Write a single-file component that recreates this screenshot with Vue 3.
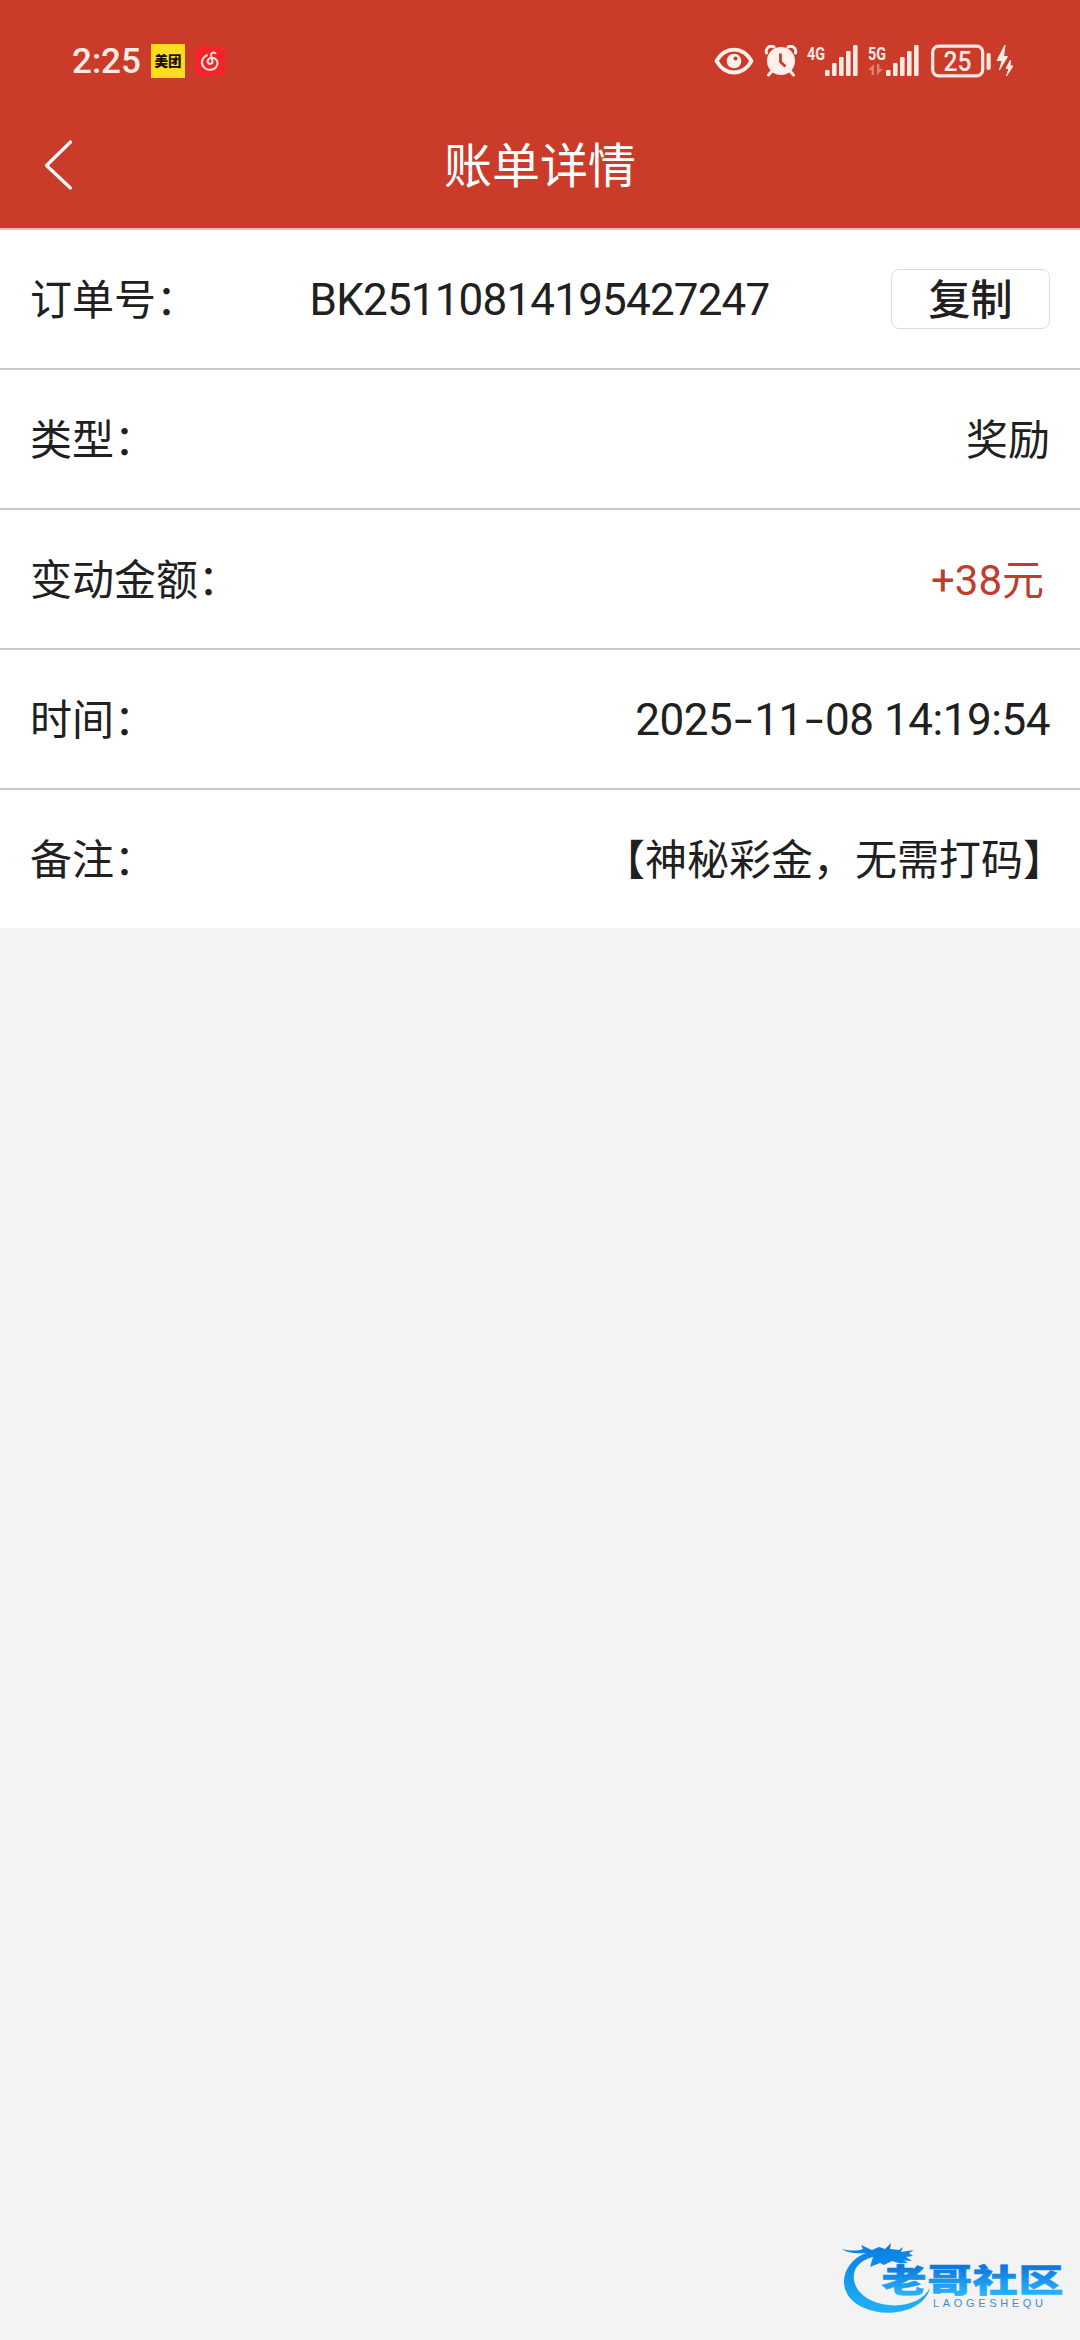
<script setup>
const rows = [
  { label: '订单号', value: 'BK25110814195427247', kind: 'order', copy: true },
  { label: '类型', value: '奖励', kind: 'plain' },
  { label: '变动金额', value: '+38元', kind: 'amount' },
  { label: '时间', value: '2025-11-08 14:19:54', kind: 'time' },
  { label: '备注', value: '【神秘彩金，无需打码】', kind: 'remark' },
]
const bars = [6, 13, 19, 25, 31]
const parts = (text) => text.split(/(-)/)
</script>

<template>
  <div class="page">
    <header class="top">
      <div class="status">
        <span class="clock">2:25</span>
        <span class="meituan">美团</span>
        <svg class="netease" width="30" height="30" viewBox="0 0 30 30">
          <rect width="30" height="30" rx="6" fill="#f5242b" />
          <path d="M20.5 7.2C18.2 5.6 15.6 7 16.1 9.5L17.5 15.4C18 18.3 12.8 19 12.6 15.5C12.5 12.2 17.1 10.5 20.5 13C24.5 16.5 22 23.8 15.2 23.8C9 23.8 5.5 18.5 7.5 13.6C8.4 11.4 10 10 12 9.2" fill="none" stroke="#ffe9e3" stroke-width="2" stroke-linecap="round" />
        </svg>
        <div class="spacer"></div>
        <svg class="eye" width="40" height="28" viewBox="0 0 40 28">
          <path d="M2.500 14C11 -1.300 29 -1.300 37.500 14C29 29.300 11 29.300 2.500 14Z" fill="none" stroke="#fff0eb" stroke-width="3.800" stroke-linejoin="round" />
          <circle cx="20" cy="14" r="7.300" fill="#fff0eb" />
          <circle cx="21.500" cy="11.500" r="2" fill="#cb3b29" />
        </svg>
        <svg class="alarm" width="34" height="32" viewBox="0 0 34 32">
          <path d="M2.500 8C1 3 6 0 10 2M31.500 8C33 3 28 0 24 2" fill="none" stroke="#fff0eb" stroke-width="3" stroke-linecap="round" />
          <path d="M8 26L4.500 30M26 26L29.500 30" stroke="#fff0eb" stroke-width="3" stroke-linecap="round" />
          <circle cx="17" cy="16" r="14" fill="#fff0eb" />
          <path d="M16.500 8.500V17L21.500 21.500" fill="none" stroke="#cb3b29" stroke-width="2.800" />
        </svg>
        <svg class="signal" width="52" height="34" viewBox="0 0 52 34">
          <text x="0" y="16" textLength="18" lengthAdjust="spacingAndGlyphs">4G</text>
          <rect v-for="(h, i) in bars" :key="i" :x="18 + i * 7" :y="32 - h" width="4.600" :height="h" rx="1.200" />
        </svg>
        <svg class="signal" width="52" height="34" viewBox="0 0 52 34">
          <text x="0" y="16" textLength="18" lengthAdjust="spacingAndGlyphs">5G</text>
          <path d="M0 26L6 20V31H3.600V26ZM9 20V31L15 25H11.400V20Z" opacity=".4" />
          <rect v-for="(h, i) in bars" :key="i" :x="18 + i * 7" :y="32 - h" width="4.600" :height="h" rx="1.200" />
        </svg>
        <svg class="battery" width="84" height="34" viewBox="0 0 84 34">
          <rect x="1.700" y="2.200" width="50" height="29.600" rx="6" fill="none" stroke="#ffe9e3" stroke-width="3.200" />
          <text x="26.500" y="26.500" text-anchor="middle" textLength="28" lengthAdjust="spacingAndGlyphs">25</text>
          <rect x="55.500" y="9" width="4.200" height="17" rx="2" />
          <path d="M74 1L66 16.500H71L68.500 26L76.500 12.500H72.500ZM79.500 16L75 24.500H78L75.500 32L82 22H79Z" stroke="#ffe9e3" stroke-width="1" stroke-linejoin="round" />
        </svg>
      </div>
      <div class="nav">
        <svg class="back" width="30" height="52" viewBox="0 0 30 52">
          <path d="M26.500 3L2.500 26.500L26.500 49" fill="none" stroke="#fff" stroke-width="3.200" stroke-linecap="round" stroke-linejoin="round" />
        </svg>
        <h1>账单详情</h1>
      </div>
    </header>

    <main class="list">
      <div v-for="row in rows" :key="row.label" class="row">
        <span class="label">{{ row.label }}：</span>
        <span class="value" :class="row.kind"><span v-for="(p, i) in parts(row.value)" :key="i" :class="{ dash: p === '-' }">{{ p }}</span></span>
        <button v-if="row.copy" class="copy">复制</button>
      </div>
    </main>

    <svg class="watermark" width="260" height="115" viewBox="0 0 260 115">
      <defs>
        <linearGradient id="ring" x1="0" y1="22" x2="0" y2="88" gradientUnits="userSpaceOnUse">
          <stop offset="0" stop-color="#0a7fe0" />
          <stop offset="1" stop-color="#20b2fb" />
        </linearGradient>
        <linearGradient id="word" x1="0" y1="0" x2="0" y2="1">
          <stop offset=".25" stop-color="#0b78df" />
          <stop offset=".85" stop-color="#28b2fa" />
        </linearGradient>
      </defs>
      <path fill="url(#ring)" d="M46 28C20 38 15 69 42 82C66 94 104 87 110 63C103 76 86 82 68 80C44 77 32 63 34 49C35 40 44 34 53 32L50 42L60 38L64 40L72 36L80 38.500L88 38L84 35.500L92 36L86 32L93 31L89 28L94 25L81 27L83 22L79 25L70 24L71 18L65 24L59 22L52 25L41 20L43 24C37 26 30 26 22 24C27 28 38 29 46 28Z" />
      <text class="word" transform="translate(61.500 67) scale(1 .72)" textLength="182">老哥社区</text>
      <text class="latin" x="113" y="81.500" textLength="110">LAOGESHEQU</text>
    </svg>
  </div>
</template>

<style>
body {
  background: #f3f3f3;
}
</style>

<style scoped>
.page {
  position: relative;
  width: 1080px;
  height: 2340px;
  overflow: hidden;
  background: #f3f3f3;
  color: #202020;
  font-family: Roboto, "Noto Sans CJK SC", sans-serif;
}
.top {
  height: 228px;
  background: #cb3b29;
  border-bottom: 2px solid #efb8b0;
}
.status {
  display: flex;
  align-items: center;
  height: 102px;
  padding: 20px 65px 0 72px;
  box-sizing: border-box;
}
.clock {
  width: 79px;
  font-size: 35px;
  font-weight: 500;
  line-height: 38px;
  padding-top: 2px;
  box-sizing: border-box;
  color: #ffeae5;
}
.meituan {
  width: 34px;
  height: 34px;
  background: #ffdc1d;
  color: #171000;
  font: 900 13.500px/33px "Noto Sans CJK SC", sans-serif;
  text-align: center;
}
.netease {
  margin-left: 10px;
}
.spacer {
  flex: 1;
}
.alarm {
  margin-left: 10px;
}
.signal {
  margin-left: 9px;
  fill: #ffe9e3;
  overflow: visible;
}
.signal text {
  font-size: 19px;
  font-weight: 700;
}
.battery {
  margin-left: 11px;
  fill: #ffe9e3;
}
.battery text {
  font-size: 28px;
  font-weight: 500;
}
.nav {
  display: flex;
  align-items: center;
  height: 126px;
  padding: 0 44px;
}
.back {
  flex: none;
}
.nav h1 {
  flex: 1;
  margin: 0 30px 0 0;
  padding-top: 3px;
  text-align: center;
  font-size: 48px;
  font-weight: 400;
  line-height: 60px;
  color: #fff;
}
.list {
  background: #fff;
}
.row {
  display: flex;
  align-items: center;
  height: 140px;
  padding: 0 30px 5px 30px;
  box-sizing: border-box;
  border-bottom: 2px solid #c8c8c8;
  font-size: 42px;
}
.row:last-child {
  height: 138px;
  border-bottom: 0;
}
.label {
  white-space: nowrap;
}
.value {
  flex: 1;
  text-align: right;
  white-space: nowrap;
}
.order {
  padding: 6px 10px 0 0;
  text-align: center;
  font-size: 44px;
  letter-spacing: -.82px;
}
.time {
  padding-top: 6px;
  font-size: 44px;
  letter-spacing: -.45px;
}
.dash {
  display: inline-block;
  width: 22px;
  text-align: center;
  transform: scaleX(1.500);
}
.amount {
  padding-right: 6px;
  color: #c03c2c;
}
.remark {
  margin-right: -15px;
}
.copy {
  width: 159px;
  height: 60px;
  margin-top: 5px;
  padding: 0 0 4px;
  border: 1px solid #ddd;
  border-radius: 8px;
  background: #fff;
  color: #202020;
  font: 500 42px/54px "Noto Sans CJK SC", sans-serif;
}
.watermark {
  position: absolute;
  right: 0;
  bottom: 0;
}
.word {
  font: 900 45px "Noto Sans CJK SC", sans-serif;
  fill: url(#word);
  stroke: url(#word);
  stroke-width: .8px;
}
.latin {
  font: 400 11px "Liberation Sans", sans-serif;
  fill: #3b8fd0;
}
</style>
